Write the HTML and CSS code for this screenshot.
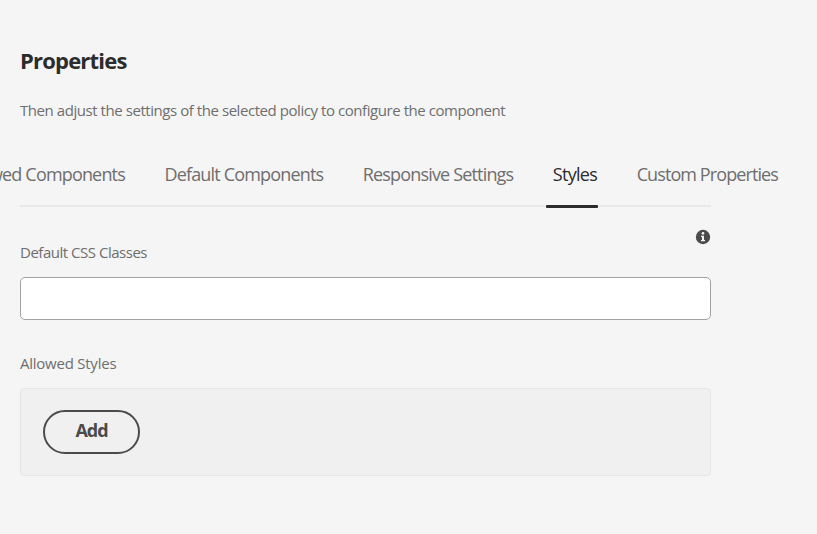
FILE: index.html
```html
<!DOCTYPE html>
<html lang="en">
<head>
<meta charset="utf-8">
<title>Properties</title>
<link rel="stylesheet" href="styles.css">
</head>
<body>
<main class="panel">
  <h1 class="title">Properties</h1>
  <p class="intro">Then adjust the settings of the selected policy to configure the component</p>
  <nav class="tabs">
    <a class="tab">Allowed Components</a>
    <a class="tab">Default Components</a>
    <a class="tab">Responsive Settings</a>
    <a class="tab selected">Styles</a>
    <a class="tab custom">Custom Properties</a>
  </nav>
  <div class="rule"><div class="indicator"></div></div>
  <div class="help">
    <svg width="16" height="16" viewBox="0 0 16 16"><circle cx="8" cy="8" r="7.2" fill="#4b4b4b"/><circle cx="8" cy="4.3" r="1.35" fill="#f5f5f5"/><path d="M6 6.7H9V11h1v1.3H6V11h1V8H6z" fill="#f5f5f5"/></svg>
  </div>
  <label class="label css-label" for="css">Default CSS Classes</label>
  <input class="field" id="css" type="text">
  <div class="label styles-label">Allowed Styles</div>
  <section class="well"><button class="add" type="button">Add</button></section>
</main>
</body>
</html>
```
FILE: styles.css
```css
* { box-sizing: border-box; }
body {
  margin: 0;
  height: 534px;
  overflow: hidden;
  background: #f5f5f5;
  color: #6e6e6e;
  font-family: "Open Sans", sans-serif;
}
.panel { width: 691px; margin-left: 20px; padding-top: 43px; }
.title { margin: 0; height: 35px; font-size: 22px; font-weight: 700; line-height: 35px; letter-spacing: -0.8px; color: #2c2c2c; }
.intro { margin: 19px 0 0; height: 26px; font-size: 15px; line-height: 26px; letter-spacing: -0.44px; white-space: nowrap; }
.tabs { display: flex; justify-content: flex-end; width: 758px; height: 56px; margin-top: 26px; gap: 39.5px; }
.tab { flex: none; font-size: 18px; line-height: 50px; letter-spacing: -0.83px; white-space: nowrap; }
.selected { color: #2c2c2c; letter-spacing: -0.7px; }
.custom { letter-spacing: -0.9px; }
.rule { height: 2px; background: #e8e8e8; padding-left: 526px; }
.indicator { width: 52px; height: 3px; border-radius: 1px; background: #2c2c2c; }
.help { display: flex; justify-content: flex-end; height: 16px; margin-top: 22px; }
.label { display: block; height: 24px; font-size: 15px; line-height: 24px; }
.css-label { margin-top: -5px; letter-spacing: -0.48px; }
.styles-label { letter-spacing: -0.24px; }
.field { display: block; width: 100%; height: 43px; margin: 13px 0 31px; border: 1px solid #a2a2a2; border-radius: 5px; background: #fff; }
.well { height: 88px; margin-top: 13px; padding: 21px 22px; border: 1px solid #e6e6e6; border-radius: 4px; background: #f0f0f0; }
.add { display: block; width: 97px; height: 44px; padding: 0 0 4px; border: 2px solid #4b4b4b; border-radius: 22px; background: transparent; color: #4b4b4b; font-family: inherit; font-size: 18px; font-weight: 700; letter-spacing: -1px; }
```
